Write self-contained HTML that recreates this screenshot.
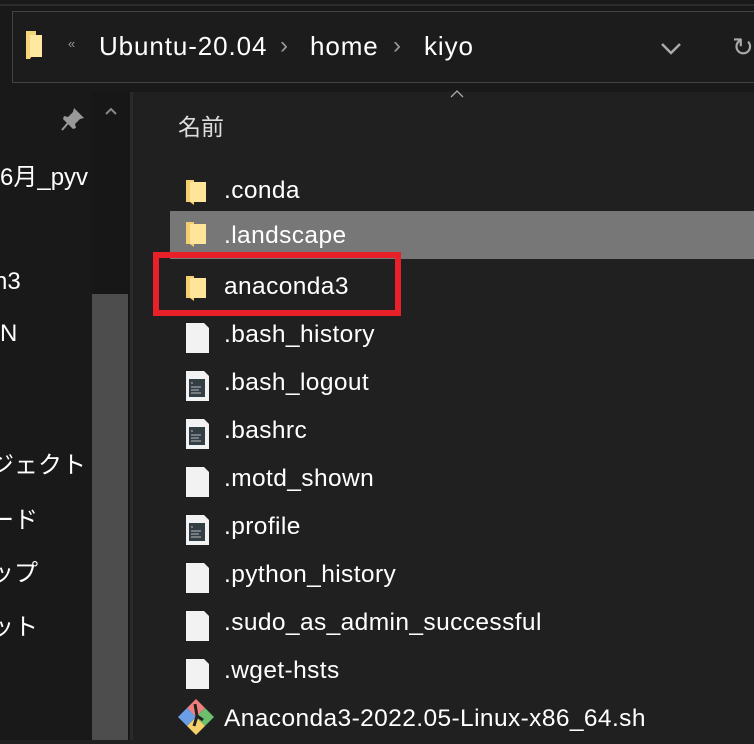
<!DOCTYPE html>
<html><head><meta charset="utf-8"><style>
*{margin:0;padding:0;box-sizing:border-box}
body{width:754px;height:740px;overflow:hidden;background:#202020;font-family:"Liberation Sans","Noto Sans CJK JP",sans-serif;color:#fff;position:relative}
.a{position:absolute}
.row{position:absolute;left:170px;width:584px;height:48px}
.row span{position:absolute;left:54px;top:9px;font-size:24.5px;white-space:nowrap;letter-spacing:0.4px}
.fold{position:absolute;left:16px;top:12px;width:21px;height:25px}
.doc{position:absolute;left:16px;top:11px;width:23px;height:30px}
</style></head><body>
<div class="a" style="left:0;top:0;width:754px;height:92px;background:#191919"></div>
<div class="a" style="left:0;top:4px;width:754px;height:2px;background:#2c2c2c"></div>
<div class="a" style="left:12px;top:11px;width:760px;height:72px;border:1px solid #444;background:#1c1c1c"></div>
<svg class="a" style="left:24px;top:31px" width="22" height="30"><path d="M2 0h10v18l-6 10H2z" fill="#f5d57a"/><path d="M6 4h12v22H6z" fill="#ffe9a0"/></svg>
<div class="a" style="left:68px;top:36px;font-size:13px;color:#999">«</div>
<div class="a" style="left:99px;top:31px;font-size:26px;letter-spacing:0.9px">Ubuntu-20.04</div>
<div class="a" style="left:280px;top:32px;font-size:24px;color:#999">›</div>
<div class="a" style="left:310px;top:31px;font-size:26px;letter-spacing:0.9px">home</div>
<div class="a" style="left:393px;top:32px;font-size:24px;color:#999">›</div>
<div class="a" style="left:424px;top:31px;font-size:26px;letter-spacing:0.9px">kiyo</div>
<svg class="a" style="left:660px;top:42px" width="22" height="14"><path d="M2 2l9 9 9-9" stroke="#aaa" stroke-width="2.5" fill="none"/></svg>
<div class="a" style="left:732px;top:32px;font-size:26px;color:#aaa">↻</div>
<div class="a" style="left:0;top:92px;width:92px;height:648px;background:#191919"></div>
<div class="a" style="left:92px;top:92px;width:38px;height:648px;background:#171717"></div>
<div class="a" style="left:92px;top:294px;width:36px;height:446px;background:#4d4d4d"></div>
<div class="a" style="left:130px;top:92px;width:3px;height:648px;background:#2a2a2a"></div>
<svg class="a" style="left:60px;top:106px" width="26" height="26"><path d="M14 2l10 10-4 1-5 5 1 4-3 1-10-10 1-3 4 1 5-5z" fill="#999"/><path d="M8 17l-6 7" stroke="#999" stroke-width="2"/></svg>
<svg class="a" style="left:104px;top:106px" width="14" height="10"><path d="M2 8l5-5 5 5" stroke="#888" stroke-width="2" fill="none"/></svg>
<svg class="a" style="left:450px;top:90px" width="14" height="8"><path d="M1 7l6-6 6 6" stroke="#aaa" stroke-width="1.3" fill="none"/></svg>
<div class="a" style="left:0;top:157px;font-size:24px">6月_pyv</div>
<div class="a" style="left:-6px;top:268px;font-size:24px">n3</div>
<div class="a" style="left:0;top:320px;font-size:24px">N</div>
<div class="a" style="left:-10px;top:445px;font-size:24px">ジェクト</div>
<div class="a" style="left:-10px;top:500px;font-size:24px">ード</div>
<div class="a" style="left:-10px;top:553px;font-size:24px">ップ</div>
<div class="a" style="left:-10px;top:607px;font-size:24px">ット</div>
<div class="a" style="left:178px;top:108px;font-size:23px;color:#ddd">名前</div>
<div class="row" style="top:168px"><svg class="fold"><path d="M0 0h8v25l-4-3H0z" fill="#f3cf6f"/><path d="M4 2h16v20H4z" fill="#ffe59a"/></svg><span>.conda</span></div>
<div class="row" style="top:211px;height:48px;background:#777"><svg class="fold" style="top:11px"><path d="M0 0h8v25l-4-3H0z" fill="#f3cf6f"/><path d="M4 2h16v20H4z" fill="#ffe59a"/></svg><span style="top:11px">.landscape</span></div>
<div class="row" style="top:264px"><svg class="fold"><path d="M0 0h8v25l-4-3H0z" fill="#f3cf6f"/><path d="M4 2h16v20H4z" fill="#ffe59a"/></svg><span>anaconda3</span></div>
<div class="a" style="left:153px;top:252px;width:248px;height:64px;border:6px solid #e8202a"></div>
<div class="row" style="top:312px"><svg class="doc"><path d="M0 0h18l5 5v25H0z" fill="#f2f2f2"/></svg><span>.bash_history</span></div>
<div class="row" style="top:360px"><svg class="doc"><path d="M0 0h18l5 5v25H0z" fill="#f2f2f2"/><rect x="3" y="8" width="16" height="18" fill="#333d44"/><path d="M5 12h2M5 16h10M5 19h8M5 22h10" stroke="#bbb"/></svg><span>.bash_logout</span></div>
<div class="row" style="top:408px"><svg class="doc"><path d="M0 0h18l5 5v25H0z" fill="#f2f2f2"/><rect x="3" y="8" width="16" height="18" fill="#333d44"/><path d="M5 12h2M5 16h10M5 19h8M5 22h10" stroke="#bbb"/></svg><span>.bashrc</span></div>
<div class="row" style="top:456px"><svg class="doc"><path d="M0 0h18l5 5v25H0z" fill="#f2f2f2"/></svg><span>.motd_shown</span></div>
<div class="row" style="top:504px"><svg class="doc"><path d="M0 0h18l5 5v25H0z" fill="#f2f2f2"/><rect x="3" y="8" width="16" height="18" fill="#333d44"/><path d="M5 12h2M5 16h10M5 19h8M5 22h10" stroke="#bbb"/></svg><span>.profile</span></div>
<div class="row" style="top:552px"><svg class="doc"><path d="M0 0h18l5 5v25H0z" fill="#f2f2f2"/></svg><span>.python_history</span></div>
<div class="row" style="top:600px"><svg class="doc"><path d="M0 0h18l5 5v25H0z" fill="#f2f2f2"/></svg><span>.sudo_as_admin_successful</span></div>
<div class="row" style="top:648px"><svg class="doc"><path d="M0 0h18l5 5v25H0z" fill="#f2f2f2"/></svg><span>.wget-hsts</span></div>
<div class="row" style="top:696px"><svg class="a" style="left:8px;top:2px" width="38" height="38"><path d="M18 1l9 9-9 9-9-9z" fill="#f08080"/><path d="M27 10l9 9-9 9-9-9z" fill="#6cc06c"/><path d="M18 19l9 9-9 9-9-9z" fill="#f5d06b"/><path d="M9 10l9 9-9 9-9-9z" fill="#6a9fe8"/><path d="M17 6l2 12-3 10M19 18l6 4" stroke="#222" stroke-width="3" fill="none"/></svg><span>Anaconda3-2022.05-Linux-x86_64.sh</span></div>
</body></html>
